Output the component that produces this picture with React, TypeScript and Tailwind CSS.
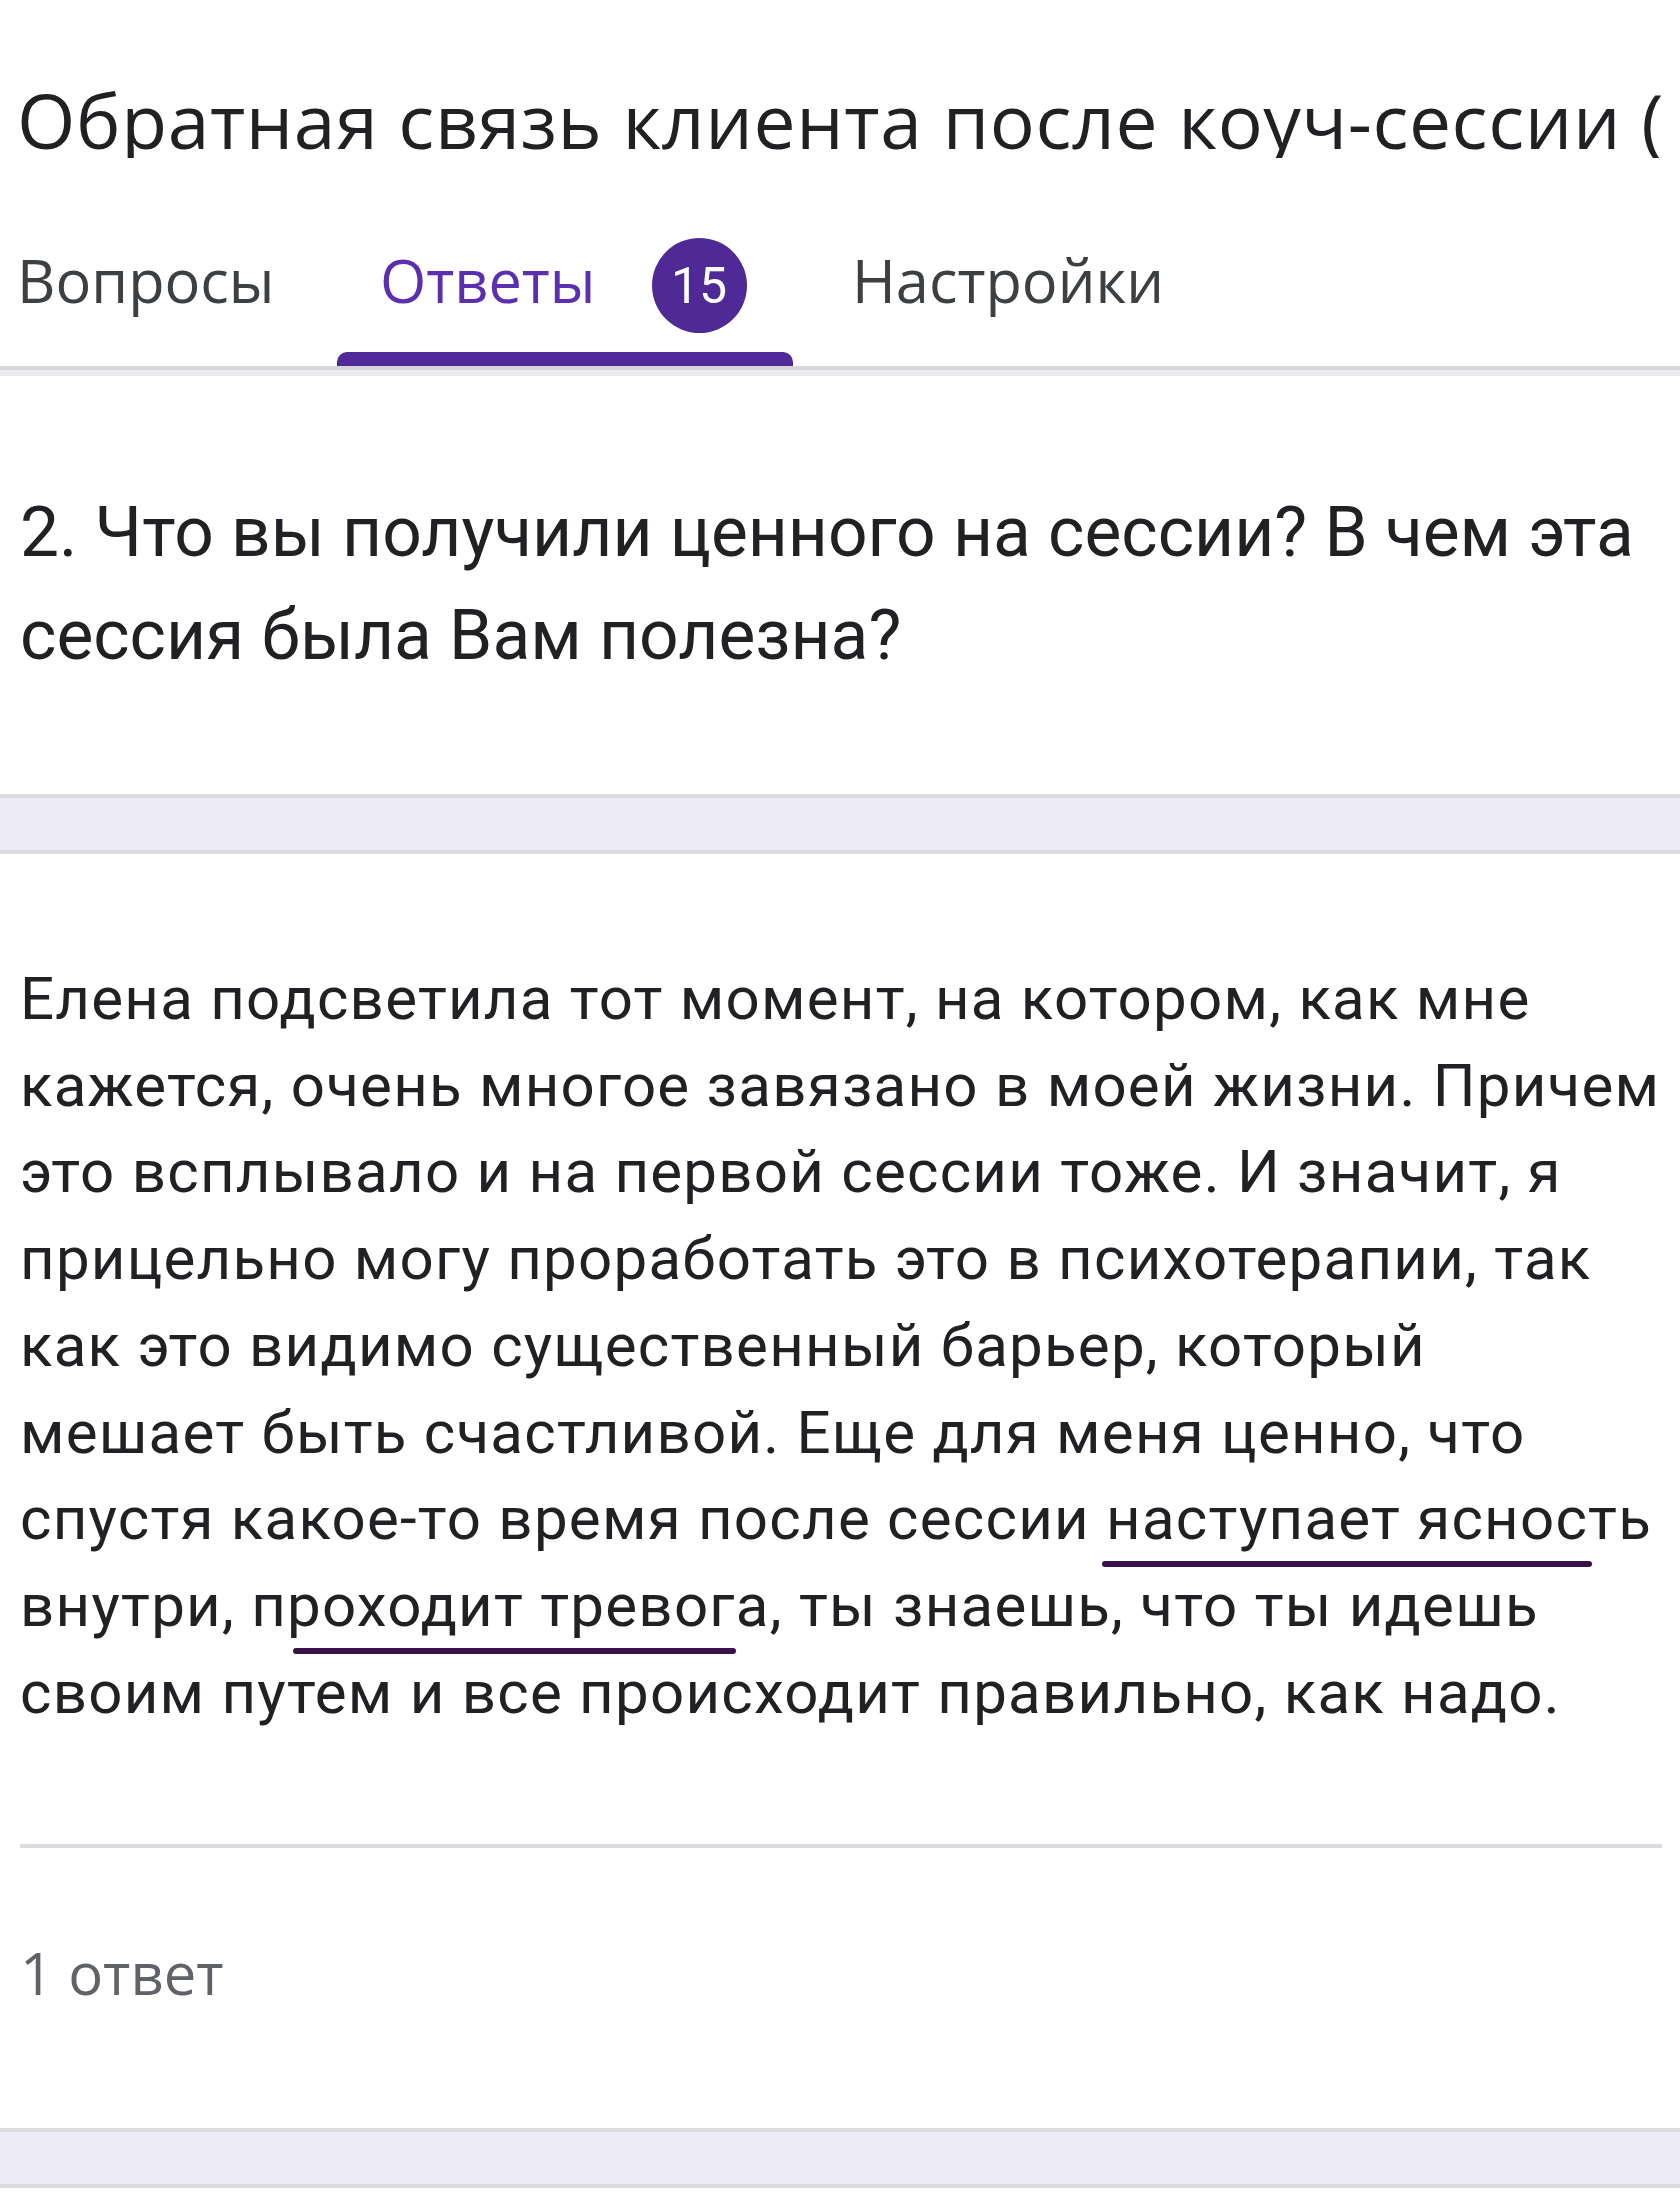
import React from 'react';

const answerLines: React.ReactNode[] = [
  'Елена подсветила тот момент, на котором, как мне',
  'кажется, очень многое завязано в моей жизни. Причем',
  'это всплывало и на первой сессии тоже. И значит, я',
  'прицельно могу проработать это в психотерапии, так',
  'как это видимо существенный барьер, который',
  'мешает быть счастливой. Еще для меня ценно, что',
  <>
    спустя какое-то время после сессии{' '}
    <Marked className="left-[-4px] right-[60px]">наступает ясность</Marked>
  </>,
  <>
    внутри, <Marked className="left-[42px] right-[34px]">проходит тревога</Marked>, ты знаешь, что ты идешь
  </>,
  'своим путем и все происходит правильно, как надо.',
];

function Marked({ children, className }: { children: React.ReactNode; className: string }) {
  return (
    <span className="relative">
      {children}
      <span className={`absolute bottom-[-13px] h-[6px] rounded-full bg-[#3a1048] ${className}`} />
    </span>
  );
}

export default function App() {
  return (
    <div className="w-[1680px] h-[2193px] overflow-hidden bg-white flex flex-col">
      {/* form title */}
      <h1 className="mt-[83px] pl-[17px] text-[75px] leading-none tracking-[0.6px] text-[#202124] whitespace-nowrap overflow-hidden font-['Open_Sans',sans-serif]">
        Обратная связь клиента после коуч-сессии (
      </h1>

      {/* tabs */}
      <div className="mt-[80px] flex font-['Open_Sans',sans-serif] font-medium text-[59.5px] leading-none">
        <div className="w-[337px] flex flex-col">
          <div className="h-[95px] flex items-start pl-[17px] text-[#3c4043]">
            <span className="mt-[12px]">Вопросы</span>
          </div>
          <div className="mt-[19px] h-[14px]" />
        </div>
        <div className="w-[456px] flex flex-col">
          <div className="h-[95px] flex items-start pl-[43px] text-[#5b2fb0]">
            <span className="mt-[12px]">Ответы</span>
            <span className="ml-[56px] w-[95px] h-[95px] rounded-full bg-[#4f2a96] text-white text-[50px] font-normal flex items-center justify-center font-['Roboto',sans-serif]">
              15
            </span>
          </div>
          <div className="mt-[19px] h-[14px] rounded-t-[10px] bg-[#4f2a98]" />
        </div>
        <div className="flex flex-col">
          <div className="h-[95px] flex items-start pl-[59px] text-[#3c4043]">
            <span className="mt-[12px]">Настройки</span>
          </div>
          <div className="mt-[19px] h-[14px]" />
        </div>
      </div>
      <div className="h-[4px] bg-[#d6d6db]" />
      <div className="h-[6px] bg-[#ececf0]" />

      {/* question */}
      <div className="mt-[105px] pl-[20px] text-[69.5px] leading-[103px] text-[#202124] font-['Roboto',sans-serif]">
        <div className="whitespace-nowrap">2. Что вы получили ценного на сессии? В чем эта</div>
        <div className="whitespace-nowrap">сессия была Вам полезна?</div>
      </div>

      <div className="mt-[107px] h-[60px] border-y-4 border-[#dadce0] bg-[#edebf7]" />

      {/* answer */}
      <div className="mt-[102px] pl-[20px] text-[60px] leading-[86.7px] tracking-[1.25px] text-[#202124] font-['Roboto',sans-serif]">
        {answerLines.map((line, i) => (
          <div key={i} className="whitespace-nowrap">
            {line}
          </div>
        ))}
      </div>

      <div className="mt-[108px] ml-[20px] w-[1642px] h-[4px] bg-[#dadce0]" />

      <div className="mt-[96px] pl-[20px] text-[58px] leading-none font-medium text-[#5f6368] font-['Open_Sans',sans-serif]">
        1 ответ
      </div>

      <div className="mt-[126px] h-[60px] border-y-4 border-[#dadce0] bg-[#edebf7]" />
    </div>
  );
}
